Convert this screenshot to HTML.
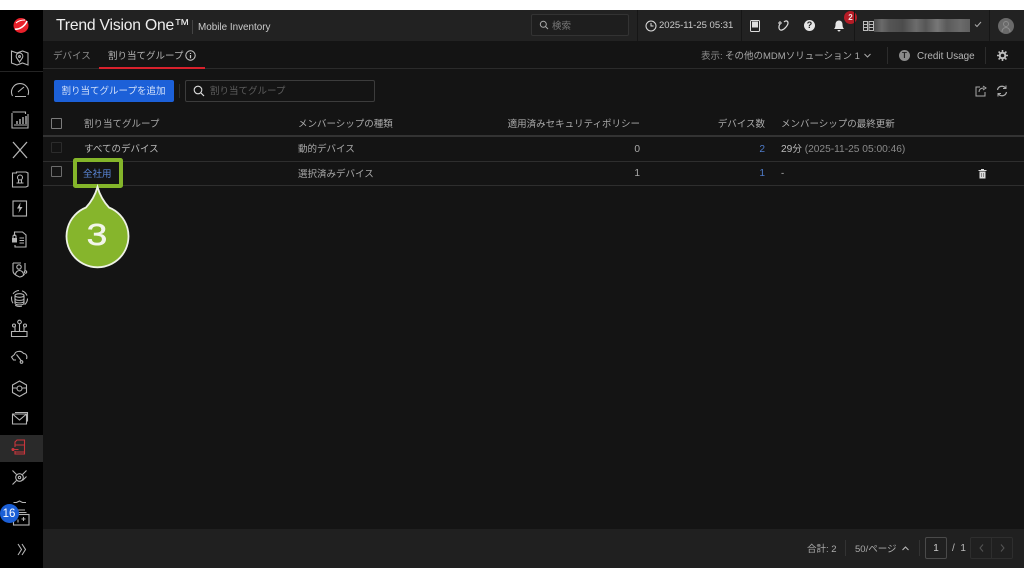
<!DOCTYPE html>
<html lang="ja"><head><meta charset="utf-8"><title>Mobile Inventory</title>
<style>
*{box-sizing:border-box}
html{margin:0;padding:0;width:1024px;height:576px;overflow:hidden;background:#fff}
body{margin:0;padding:0;width:1024px;height:576px;overflow:hidden;position:relative;font-family:"Liberation Sans","Noto Sans CJK JP",sans-serif;color:#bdbdbd;font-size:9.5px;filter:blur(.3px)}
.a{position:absolute;white-space:nowrap;line-height:12px}
.b{position:absolute}
svg{position:absolute;overflow:visible}
.ic{fill:none;stroke:#b5b5b5;stroke-width:1.1}
.r{text-align:right}
</style></head><body>
<div class="b" style="left:0;top:9.5px;width:1024px;height:558px;background:#141414"></div>
<div class="b" style="left:0;top:9.5px;width:43px;height:558px;background:#000"></div>
<div class="b" style="left:43px;top:9.5px;width:981px;height:31.5px;background:#222"></div>
<div class="b" style="left:43px;top:68px;width:981px;height:1px;background:#2b2b2b"></div>
<div class="b" style="left:0;top:71px;width:43px;height:1px;background:#242424"></div>
<div class="b" style="left:0;top:435px;width:43px;height:27px;background:#2a2a2a"></div>
<div class="b" style="left:43px;top:529px;width:981px;height:38.5px;background:#202020"></div>

<!-- sidebar icons -->
<svg style="left:0;top:0" width="43" height="576" viewBox="0 0 43 576">
<circle cx="21" cy="25.500" r="7.500" fill="#e8202a"/><path d="M15 29c4 1 10-3 12-8" stroke="#fff" stroke-width="1.600" fill="none"/><path d="M16 23c2-2 6-3 9-3" stroke="#fff" stroke-width="1" fill="none"/>
<g class="ic">
<path d="M11.500 51l5.500 2 5.500-2 5.500 2v12l-5.500-2-5.500 2-5.500-2z"/><path d="M19.500 62l-2.800-4a3.300 3.300 0 1 1 5.600 0z"/><circle cx="19.500" cy="56.500" r=".9"/>
<path d="M12.500 96a8.500 8.500 0 1 1 15.500-1"/><path d="M18 92l6-5M15 96.500h11"/>
<path d="M12.500 112h13v2M28 114v14H12v-15M27 125H14"/><path d="M17 124v-3M20 124v-5M23 124v-7M26 124v-8" stroke-width="1.400"/>
<path d="M13 142l14 16M27 142l-14 16" stroke-width="1.300"/>
<path d="M12.500 173h4v-1h9.500l2 1v13l-2 1H12.500z"/><circle cx="20" cy="177.500" r="2.500"/><path d="M16.500 183h7M18.500 180v3M21.500 180v3"/>
<rect x="13" y="201" width="13.500" height="15"/><path d="M20.500 202.500l-3.500 6h2.500l-1 4.500 4-6h-2.500z" fill="#b5b5b5" stroke="none"/>
<path d="M14.500 236v-4h8l3.500 3v12H15v-2"/><rect x="12" y="238" width="5" height="4.500" fill="#b5b5b5" stroke="none"/><path d="M13 238v-1.500a1.500 1.500 0 0 1 3 0V238M19.500 238h4.500M19.500 240.500h4.500M19.500 243h4.500"/>
<path d="M13 263h8M13 263v8c0 3 4 5 6.500 6 1.500 0 4-1 5-3M25 263v8"/><circle cx="19" cy="267" r="2.200"/><path d="M15.500 275c0-6 8-6 8 0"/><circle cx="25.500" cy="272" r="1.200"/>
<ellipse cx="19.500" cy="295.500" rx="4.500" ry="1.800"/><path d="M15 295.500v7.500c0 2.500 9 2.500 9 0v-7.500M15 298.500c0 2.500 9 2.500 9 0M15 301c0 2.500 9 2.500 9 0"/><circle cx="19.500" cy="298.500" r="8" stroke-dasharray="7 3"/>
<path d="M11.500 336.500h15.500v-5H11.500zM15 331v-4M19.500 331v-7M24 331v-4"/><circle cx="19.500" cy="322" r="1.800"/><circle cx="14" cy="325.500" r="1.500"/><circle cx="25" cy="325.500" r="1.500"/>
<path d="M16 360h-2.500l-2-3 3-2.500c1-4 7-4 9-1 3 0 4 3 3 5.500"/><path d="M16.500 354.500l5 6.500"/><circle cx="21.500" cy="362" r="1.300"/>
<path d="M19.500 381l7 4v7.500l-7 4-7-4V385z"/><circle cx="19.500" cy="388.500" r="2.500"/><path d="M12.500 388h4M22.500 388h4"/>
<path d="M12.500 414h14v10h-14z"/><path d="M12.500 414l7 6 7-6M15 412.500h12.500v9"/>
</g>
<g fill="none" stroke="#c8363c" stroke-width="1.100"><path d="M15 447v-5l2-2h7.500v14H15v-3"/><path d="M12.500 449.500h6M15 445h9.500M15 452h9.500"/><circle cx="13" cy="449.500" r="1" fill="#c8363c"/></g>
<g class="ic">
<circle cx="19.500" cy="477.500" r="3.800"/><circle cx="19.500" cy="477.500" r="1.200"/><path d="M16.500 474.500l-4-4M22.500 474.500l4-4M16.500 480.500l-4 4M22.500 480.500l4-4"/>
<path d="M13.500 502.500h3l3-1.500 3 1.500h3.500"/>
<path d="M16 510h9M14.500 512.500h12"/><rect x="13.500" y="514.500" width="15.500" height="10.500"/><path d="M23.500 517v4M21.500 519h4M18 519.500v3"/>
<path d="M18 544l3.500 5.500-3.500 5.500M22 544l3.500 5.500-3.500 5.500"/>
</g>
</svg>
<div class="b" style="left:0;top:504px;width:19px;height:19px;border-radius:50%;background:#1b5fd6"></div>
<div class="a" style="left:0;top:507px;width:18px;text-align:center;color:#fff;font-size:11.500px;line-height:14px">16</div>

<!-- header -->
<div class="a" style="left:56px;top:16px;font-size:15.700px;line-height:20px;color:#eee;letter-spacing:-.2px">Trend Vision One™</div>
<div class="b" style="left:192px;top:20px;width:1px;height:14px;background:#444"></div>
<div class="a" style="left:198px;top:22px;font-size:9.900px;color:#ccc">Mobile Inventory</div>
<div class="b" style="left:531px;top:14px;width:98px;height:22px;border:1px solid #333;border-radius:2px;background:#1e1e1e"></div>
<svg style="left:539px;top:20px" width="10" height="10" viewBox="0 0 10 10"><circle cx="4.300" cy="4.300" r="3" fill="none" stroke="#aaa"/><path d="M6.500 6.500l2.500 2.500" stroke="#aaa"/></svg>
<div class="a" style="left:552px;top:20.500px;color:#777">検索</div>
<div class="b" style="left:637px;top:10px;width:1px;height:31px;background:#161616"></div>
<svg style="left:645px;top:20px" width="12" height="12" viewBox="0 0 12 12"><circle cx="6" cy="6" r="5" fill="none" stroke="#ddd"/><path d="M6 3v3h2.500" fill="none" stroke="#ddd"/></svg>
<div class="a" style="left:659px;top:20px;font-size:9.500px;color:#ccc">2025-11-25 05:31</div>
<div class="b" style="left:741px;top:10px;width:1px;height:31px;background:#161616"></div>
<svg style="left:750px;top:20px" width="10" height="12" viewBox="0 0 10 12"><rect x=".5" y=".5" width="9" height="11" rx="1" fill="none" stroke="#ddd"/><rect x="2" y="1.500" width="6" height="6" fill="#ddd"/></svg>
<svg style="left:777px;top:20px" width="12" height="12" viewBox="0 0 12 12"><path d="M3 4C1 7 2 11 5 10c3-1 6-5 6-7S9 0 7 2" fill="none" stroke="#ddd" stroke-width="1.200"/><path d="M1 3h4M3 1v4" stroke="#ddd"/></svg>
<div class="b" style="left:804px;top:20px;width:11px;height:11px;border-radius:50%;background:#e6e6e6;color:#222;font-size:9px;font-weight:bold;line-height:11px;text-align:center">?</div>
<svg style="left:833px;top:20px" width="12" height="12" viewBox="0 0 12 12"><path d="M6 .5c2.500 0 3.500 2 3.500 4S10 8 11 9H1c1-1 1.500-2.500 1.500-4.500S3.500.5 6 .5zM4.500 10h3c0 2-3 2-3 0z" fill="#e6e6e6"/></svg>
<div class="b" style="left:844px;top:10.500px;width:13px;height:13px;border-radius:50%;background:#b51c26;color:#f3dcdc;font-size:8px;font-weight:bold;line-height:13px;text-align:center">2</div>
<div class="b" style="left:854px;top:10px;width:1px;height:31px;background:#161616"></div>
<svg style="left:863px;top:21px" width="11" height="10" viewBox="0 0 11 10"><rect x=".5" y=".5" width="4" height="9" fill="none" stroke="#bbb"/><rect x="6" y=".5" width="4.500" height="9" fill="none" stroke="#bbb"/><path d="M1 3.500h3M1 6.500h3M6.500 3.500h3.500M6.500 6.500h3.500" stroke="#bbb"/></svg>
<div class="b" style="left:874px;top:19px;width:96px;height:13px;background:linear-gradient(90deg,#4a4a4a 0,#6a6a6a 8%,#555 16%,#4c4c4c 30%,#6c6c6c 44%,#565656 54%,#777 66%,#5a5a5a 76%,#6b6b6b 90%,#5f5f5f 100%)"></div>
<svg style="left:974px;top:21px" width="8" height="7" viewBox="0 0 8 7"><path d="M1 3.500l2 2 4-4.500" fill="none" stroke="#aaa"/></svg>
<div class="b" style="left:989px;top:10px;width:1px;height:31px;background:#161616"></div>
<div class="b" style="left:998px;top:18px;width:16px;height:16px;border-radius:50%;background:#6a6a6a"></div>
<svg style="left:1001px;top:20px" width="10" height="13" viewBox="0 0 10 13"><circle cx="5" cy="4" r="2.500" fill="none" stroke="#8c8c8c"/><path d="M1 12c0-6 8-6 8 0" fill="none" stroke="#8c8c8c"/></svg>

<!-- tabs -->
<div class="a" style="left:53px;top:50.500px;color:#8d8d8d">デバイス</div>
<div class="a" style="left:108px;top:50.500px;color:#b5b5b5">割り当てグループ</div>
<svg style="left:184.500px;top:50px" width="11" height="11" viewBox="0 0 11 11"><circle cx="5.500" cy="5.500" r="4.700" fill="none" stroke="#ccc"/><path d="M5.500 3v1M5.500 5v3.200" stroke="#ccc" stroke-width="1.200"/></svg>
<div class="b" style="left:99px;top:67px;width:106px;height:1.500px;background:#d8212c"></div>
<div class="a" style="left:701px;top:51px;color:#8d8d8d">表示:</div>
<div class="a" style="left:725px;top:51px;color:#aaa">その他のMDMソリューション 1</div>
<svg style="left:864px;top:53px" width="7" height="5" viewBox="0 0 7 5"><path d="M.5 1l3 3 3-3" fill="none" stroke="#aaa"/></svg>
<div class="b" style="left:887px;top:47px;width:1px;height:17px;background:#2c2c2c"></div>
<div class="b" style="left:899px;top:50px;width:11px;height:11px;border-radius:50%;background:#8a8a8a;color:#222;font-size:8px;font-weight:bold;line-height:11px;text-align:center">T</div>
<div class="a" style="left:917px;top:50.500px;font-size:9.900px;color:#b5b5b5">Credit Usage</div>
<div class="b" style="left:985px;top:47px;width:1px;height:17px;background:#2c2c2c"></div>
<svg style="left:997px;top:50px" width="11" height="11" viewBox="0 0 11 11"><circle cx="5.500" cy="5.500" r="2.800" fill="none" stroke="#bbb" stroke-width="2"/><path d="M5.500 0v2M5.500 9v2M0 5.500h2M9 5.500h2M1.600 1.600l1.400 1.400M8 8l1.400 1.400M9.400 1.600L8 3M3 8L1.600 9.400" stroke="#bbb" stroke-width="1.600"/></svg>

<!-- toolbar -->
<div class="b" style="left:53.500px;top:80px;width:120px;height:21.500px;border-radius:2px;background:#1c60d8"></div>
<div class="a" style="left:53.500px;top:86px;width:120px;text-align:center;color:#d5e2fa">割り当てグループを追加</div>
<div class="b" style="left:179px;top:84px;width:1px;height:14px;background:#2c2c2c"></div>
<div class="b" style="left:185px;top:80px;width:190px;height:21.500px;border:1px solid #3c3c3c;border-radius:2px"></div>
<svg style="left:193px;top:85px" width="12" height="12" viewBox="0 0 12 12"><circle cx="5" cy="5" r="3.800" fill="none" stroke="#ddd" stroke-width="1.100"/><path d="M8 8l3 3" stroke="#ddd" stroke-width="1.200"/></svg>
<div class="a" style="left:210px;top:86px;color:#5e5e5e">割り当てグループ</div>
<svg style="left:975px;top:85px" width="12" height="12" viewBox="0 0 12 12"><path d="M5 2H1v9h9V7" fill="none" stroke="#aaa"/><path d="M4 7c0-3 2-4 5-4M8 1l3 2-3 2" fill="none" stroke="#aaa"/></svg>
<svg style="left:996px;top:85px" width="12" height="12" viewBox="0 0 12 12"><path d="M1.500 5a4.500 4.500 0 0 1 8-2M10.500 7a4.500 4.500 0 0 1-8 2" fill="none" stroke="#aaa" stroke-width="1.200"/><path d="M10 .5v3H7M2 11.500v-3h3" fill="none" stroke="#aaa"/></svg>

<!-- table -->
<div class="b" style="left:51px;top:117.500px;width:11px;height:11px;border:1px solid #7c7c7c;border-radius:1px"></div>
<div class="a" style="left:84px;top:119px;color:#aaa">割り当てグループ</div>
<div class="a" style="left:298px;top:119px;color:#aaa">メンバーシップの種類</div>
<div class="a r" style="left:440px;width:200px;top:119px;color:#aaa">適用済みセキュリティポリシー</div>
<div class="a r" style="left:665px;width:100px;top:119px;color:#aaa">デバイス数</div>
<div class="a" style="left:781px;top:119px;color:#aaa">メンバーシップの最終更新</div>
<div class="b" style="left:43px;top:135px;width:981px;height:2px;background:#333"></div>

<div class="b" style="left:51px;top:142px;width:11px;height:11px;border:1px solid #2c2c2c;border-radius:1px"></div>
<div class="a" style="left:84px;top:144px;color:#bbb">すべてのデバイス</div>
<div class="a" style="left:298px;top:144px;color:#aaa">動的デバイス</div>
<div class="a r" style="left:540px;width:100px;top:144px;font-size:10.200px;color:#aaa">0</div>
<div class="a r" style="left:665px;width:100px;top:144px;font-size:10.200px;color:#4f7cc9">2</div>
<div class="a" style="left:781px;top:144px;color:#bbb;font-size:10.200px">29<span style="font-size:9.500px">分</span> <span style="color:#8a8a8a">(2025-11-25 05:00:46)</span></div>
<div class="b" style="left:43px;top:160.500px;width:981px;height:1px;background:#2e2e2e"></div>

<div class="b" style="left:51px;top:166px;width:11px;height:11px;border:1px solid #6c6c6c;border-radius:1px"></div>
<div class="a" style="left:298px;top:168.500px;color:#aaa">選択済みデバイス</div>
<div class="a r" style="left:540px;width:100px;top:168px;font-size:10.200px;color:#aaa">1</div>
<div class="a r" style="left:665px;width:100px;top:168px;font-size:10.200px;color:#4f7cc9">1</div>
<div class="a" style="left:781px;top:168px;color:#bbb">-</div>
<svg style="left:977px;top:168px" width="11" height="11" viewBox="0 0 11 11"><path d="M1.500 2h8v1h-8zM4 1h3v1H4zM2.500 3.500h6V10.500h-6z" fill="#ddd"/><path d="M4.300 5v4M6.700 5v4" stroke="#555" stroke-width=".6"/></svg>
<div class="b" style="left:43px;top:185px;width:981px;height:1px;background:#2e2e2e"></div>

<!-- highlight -->
<div class="b" style="left:72.500px;top:158px;width:50px;height:30px;border:4px solid #84b52a;border-radius:2.500px"></div>
<div class="a" style="left:83px;top:168.500px;color:#5b87d8">全社用</div>
<svg style="left:60px;top:184px" width="76" height="88" viewBox="0 0 76 88"><path d="M37.500 3C39.500 10 43 17 49 23.500A31 31 0 1 1 26 23.500C32 17 35.500 10 37.500 3z" fill="#86b52c" stroke="#eef2e6" stroke-width="1.800"/></svg>
<div class="a" style="left:64.500px;top:214.500px;width:64px;text-align:center;color:#f2f5ea;font-size:31px;line-height:40px;-webkit-text-stroke:.5px #f2f5ea;transform:scaleX(1.2)">3</div>

<!-- footer -->
<div class="a" style="left:807px;top:543.500px;color:#aaa">合計: 2</div>
<div class="b" style="left:845px;top:540px;width:1px;height:16px;background:#333"></div>
<div class="a" style="left:855px;top:543.500px;color:#aaa">50/ページ</div>
<svg style="left:902px;top:546px" width="7" height="5" viewBox="0 0 7 5"><path d="M.5 4l3-3 3 3" fill="none" stroke="#bbb"/></svg>
<div class="b" style="left:919px;top:540px;width:1px;height:16px;background:#333"></div>
<div class="b" style="left:925px;top:537px;width:22px;height:22px;border:1px solid #4a4a4a;border-radius:2px"></div>
<div class="a" style="left:925px;top:543px;width:22px;text-align:center;font-size:10px;color:#ccc">1</div>
<div class="a" style="left:952px;top:543px;font-size:10px;color:#bbb">/ &nbsp;1</div>
<div class="b" style="left:970px;top:537px;width:43px;height:22px;border:1px solid #2e2e2e;border-radius:2px"></div>
<div class="b" style="left:991px;top:537px;width:1px;height:22px;background:#2e2e2e"></div>
<svg style="left:970px;top:537px" width="43" height="22" viewBox="0 0 43 22"><path d="M13 7.500l-3 3.500 3 3.500M31 7.500l3 3.500-3 3.500" fill="none" stroke="#555"/></svg>
</body></html>
